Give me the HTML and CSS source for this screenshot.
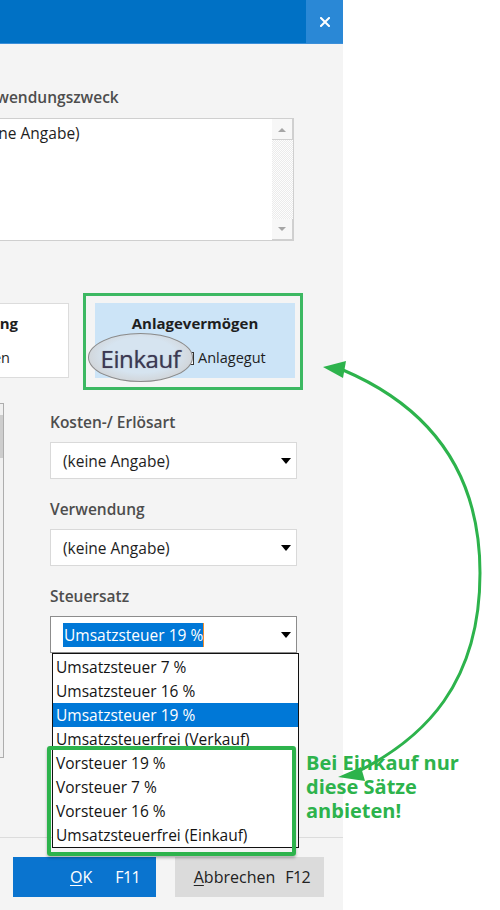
FILE: index.html
```html
<!DOCTYPE html>
<html lang="de">
<head>
<meta charset="utf-8">
<title>Buchung bearbeiten</title>
<link rel="stylesheet" href="styles.css">
</head>
<body>
<div class="screen">
  <div class="dialog">
    <div class="titlebar">
      <button class="close" type="button" aria-label="Schließen">
        <svg width="10" height="10" viewBox="0 0 10 10"><path d="M1 1L9 9M9 1L1 9" stroke="#fff" stroke-width="2" stroke-linecap="square"/></svg>
      </button>
    </div>

    <div class="content">
      <div class="label purpose-label">Verwendungszweck</div>
      <div class="memo">
        <div class="memo-text">(keine Angabe)</div>
        <div class="vscroll">
          <div class="sb-btn sb-up"><svg width="8" height="5" viewBox="0 0 8 5"><path d="M0 5L4 1L8 5Z" fill="#a6a6a6"/></svg></div>
          <div class="sb-track"></div>
          <div class="sb-btn sb-down"><svg width="8" height="5" viewBox="0 0 8 5"><path d="M0 0L4 4L8 0Z" fill="#a6a6a6"/></svg></div>
        </div>
      </div>

      <div class="categories">
        <div class="cat cat-plain">
          <div class="cat-title">Buchung</div>
          <div class="cat-option">Ausgaben</div>
        </div>
        <div class="cat cat-active">
          <div class="cat-title">Anlagevermögen</div>
          <div class="cat-option"><span class="check"></span>Anlagegut</div>
          <div class="oval">Einkauf</div>
          <div class="frame frame-top"></div>
        </div>
      </div>

      <div class="lower">
        <div class="listbox">
          <div class="lb-scroll"><div class="lb-thumb"></div></div>
        </div>
        <div class="form">
          <div class="group">
            <div class="label">Kosten-/ Erlösart</div>
            <div class="select"><span class="value">(keine Angabe)</span><svg class="caret" width="10" height="6" viewBox="0 0 10 6"><path d="M0 0H10L5 6Z" fill="#000"/></svg></div>
          </div>
          <div class="group">
            <div class="label">Verwendung</div>
            <div class="select"><span class="value">(keine Angabe)</span><svg class="caret" width="10" height="6" viewBox="0 0 10 6"><path d="M0 0H10L5 6Z" fill="#000"/></svg></div>
          </div>
          <div class="group">
            <div class="label">Steuersatz</div>
            <div class="select select-open">
              <span class="value"><span class="sel">Umsatzsteuer 19 %</span></span>
              <svg class="caret" width="10" height="6" viewBox="0 0 10 6"><path d="M0 0H10L5 6Z" fill="#000"/></svg>
              <ul class="dropdown">
                <li>Umsatzsteuer 7 %</li>
                <li>Umsatzsteuer 16 %</li>
                <li class="active">Umsatzsteuer 19 %</li>
                <li>Umsatzsteuerfrei (Verkauf)</li>
                <li>Vorsteuer 19 %</li>
                <li>Vorsteuer 7 %</li>
                <li>Vorsteuer 16 %</li>
                <li>Umsatzsteuerfrei (Einkauf)</li>
              </ul>
              <div class="frame frame-list"></div>
            </div>
          </div>
        </div>
      </div>
    </div>

    <div class="footer">
      <button class="btn btn-primary" type="button"><span class="btn-label"><u>O</u>K</span><span class="key">F11</span></button>
      <button class="btn btn-secondary" type="button"><span class="btn-label"><u>A</u>bbrechen</span><span class="key">F12</span></button>
    </div>
  </div>

  <div class="note">Bei Einkauf nur<br>diese Sätze<br>anbieten!</div>

  <svg class="arrows" width="500" height="910" viewBox="0 0 500 910">
    <path d="M343 370 C418 402 480 461 480 573 C480 683 425 738 357 772" fill="none" stroke="#2db34c" stroke-width="3"/>
    <polygon points="323,367 346,361 343,378" fill="#2db34c"/>
    <polygon points="338,777 361,767 365,781" fill="#2db34c"/>
  </svg>
</div>
</body>
</html>
```

FILE: styles.css
```css
* { box-sizing: border-box; }

html, body {
  margin: 0;
  padding: 0;
}

body {
  background: #fff;
  font-family: "Open Sans", "Noto Sans", sans-serif;
  color: #1e1e1e;
}

.screen {
  position: relative;
  width: 500px;
  height: 910px;
  overflow: hidden;
  background: #fff;
}

/* dialog window */
.dialog {
  width: 343px;
  height: 910px;
  background: #f4f4f4;
  display: flex;
  flex-direction: column;
  overflow: hidden;
}

.titlebar {
  flex: none;
  height: 44px;
  background: #0071c5;
  border-bottom: 1px solid #3b8fd9;
  display: flex;
  justify-content: flex-end;
}

.close {
  width: 37px;
  height: 43px;
  border: 0;
  padding: 0;
  background: #2a88d6;
  display: flex;
  align-items: center;
  justify-content: center;
}

.content {
  flex: 1;
  display: flex;
  flex-direction: column;
  padding-top: 43px;
}

.label {
  font-size: 15.5px;
  line-height: 20px;
  font-weight: 600;
  color: #4d4d4d;
  white-space: nowrap;
}

.purpose-label {
  margin-left: -29px;
  margin-bottom: 11px;
}

/* memo field */
.memo {
  margin-left: -100px;
  width: 394px;
  height: 123px;
  background: #fff;
  border: 1px solid #cfcfcf;
  display: flex;
}

.memo-text {
  flex: 1;
  font-size: 15.5px;
  line-height: 20px;
  padding: 4px 0 0 72px;
  white-space: nowrap;
}

.vscroll {
  width: 21px;
  display: flex;
  flex-direction: column;
}

.sb-btn {
  height: 21px;
  flex: none;
  background: #f7f7f7;
  border-right: 1px solid #d0d0d0;
  border-bottom: 1px solid #d0d0d0;
  display: flex;
  align-items: center;
  justify-content: center;
}

.sb-track {
  flex: 1;
  background: repeating-conic-gradient(#ebebeb 0 25%, #fdfdfd 0 50%) 0 0 / 2px 2px;
}

/* category boxes */
.categories {
  margin-top: 62px;
  display: flex;
  gap: 26px;
}

.cat {
  width: 200px;
  height: 75px;
  flex: none;
  display: flex;
  flex-direction: column;
  padding-top: 10px;
}

.cat-plain {
  margin-left: -131px;
  background: #fff;
  border: 1px solid #dcdcdc;
  align-items: flex-end;
  padding-right: 50px;
  padding-top: 9px;
}

.cat-plain .cat-option {
  margin-right: 8px;
}

.cat-active {
  position: relative;
  background: #cce4f7;
  align-items: center;
}

.cat-title {
  font-size: 15px;
  line-height: 20px;
  font-weight: 700;
  color: #1e1e1e;
}

.cat-option {
  margin-top: 15px;
  font-size: 14.5px;
  line-height: 20px;
  display: flex;
  align-items: center;
}

.cat-active .cat-option {
  align-self: flex-start;
  padding-left: 86px;
}

.check {
  width: 13px;
  height: 13px;
  border: 1px solid #333;
  background: #fff;
  margin-right: 4px;
}

.oval {
  position: absolute;
  left: -7px;
  top: 30px;
  width: 105px;
  height: 49px;
  border-radius: 50%;
  border: 1px solid #8a8a8a;
  background: radial-gradient(ellipse at 50% 45%, #d6e4f0 0%, #d6e4f0 48%, #d2d7dc 70%, #b5b5b5 90%, #949494 100%);
  display: flex;
  align-items: center;
  justify-content: center;
  font-size: 24px;
  letter-spacing: -0.4px;
  color: #3b3852;
  text-shadow: 0 0 1px rgba(59, 56, 82, 0.6);
  padding-top: 1px;
}

.frame {
  position: absolute;
  pointer-events: none;
}

.frame-top {
  left: -12px;
  top: -10px;
  right: -8px;
  bottom: -12px;
  border: 3px solid #3cb862;
}

/* lower area */
.lower {
  margin-top: 25px;
  display: flex;
}

.listbox {
  margin-left: -200px;
  width: 204px;
  height: 355px;
  flex: none;
  background: #fff;
  border: 1px solid #adadad;
  display: flex;
  justify-content: flex-end;
}

.lb-scroll {
  width: 17px;
  background: #f0f0f0;
  padding-top: 11px;
}

.lb-thumb {
  height: 43px;
  background: #cdcdcd;
}

.form {
  margin-left: 46px;
  width: 247px;
  padding-top: 9px;
  display: flex;
  flex-direction: column;
  gap: 20px;
}

.group .label {
  margin-bottom: 10px;
}

.select {
  position: relative;
  height: 37px;
  background: #fff;
  border: 1px solid #d9d9d9;
  display: flex;
  align-items: center;
  padding-left: 12px;
  padding-right: 5px;
  font-size: 15.5px;
}

.select .value {
  flex: 1;
  white-space: nowrap;
}

.select-open {
  border-color: #8c8c8c;
}

.sel {
  background: #0078d7;
  color: #fff;
  padding: 1px 0 1px 1px;
  border-right: 1.5px solid #f08c2a;
}

.dropdown {
  position: absolute;
  top: calc(100% + 1px);
  left: 1px;
  width: 247px;
  margin: 0;
  padding: 1px 0 0;
  list-style: none;
  background: #fff;
  border: 1px solid #111;
  z-index: 2;
}

.dropdown li {
  height: 24px;
  line-height: 24px;
  padding-left: 3px;
  white-space: nowrap;
  color: #141414;
}

.dropdown li.active {
  background: #0078d7;
  color: #fff;
}

.frame-list {
  left: -4px;
  top: calc(100% + 94px);
  width: 249px;
  height: 110px;
  border: 4px solid #2db34c;
  border-radius: 3px;
  box-shadow: 0 2px 3px rgba(0, 0, 0, 0.28);
  z-index: 3;
}

/* footer buttons */
.footer {
  flex: none;
  border-top: 1px solid #dcdcdc;
  padding: 19px 19px 13px 13px;
  display: flex;
  justify-content: flex-end;
  gap: 19px;
}

.btn {
  flex: none;
  height: 40px;
  border: 0;
  font-family: inherit;
  font-size: 16px;
  display: flex;
  align-items: center;
  justify-content: flex-end;
  padding: 0 16px 0 0;
}

.btn .key {
  letter-spacing: -0.6px;
}

.btn u {
  text-underline-offset: 2px;
}

.btn-primary {
  width: 143px;
  background: #0a74cf;
  color: #fff;
}

.btn-primary .key {
  margin-left: 23px;
}

.btn-secondary {
  width: 149px;
  background: #dbdbdb;
  color: #222;
  padding-right: 14px;
}

.btn-secondary .key {
  margin-left: 10px;
}

/* annotation */
.note {
  position: absolute;
  left: 306px;
  top: 751px;
  font-size: 20px;
  line-height: 24px;
  font-weight: 700;
  color: #2db34c;
  white-space: nowrap;
}

.arrows {
  position: absolute;
  left: 0;
  top: 0;
  pointer-events: none;
}
```
